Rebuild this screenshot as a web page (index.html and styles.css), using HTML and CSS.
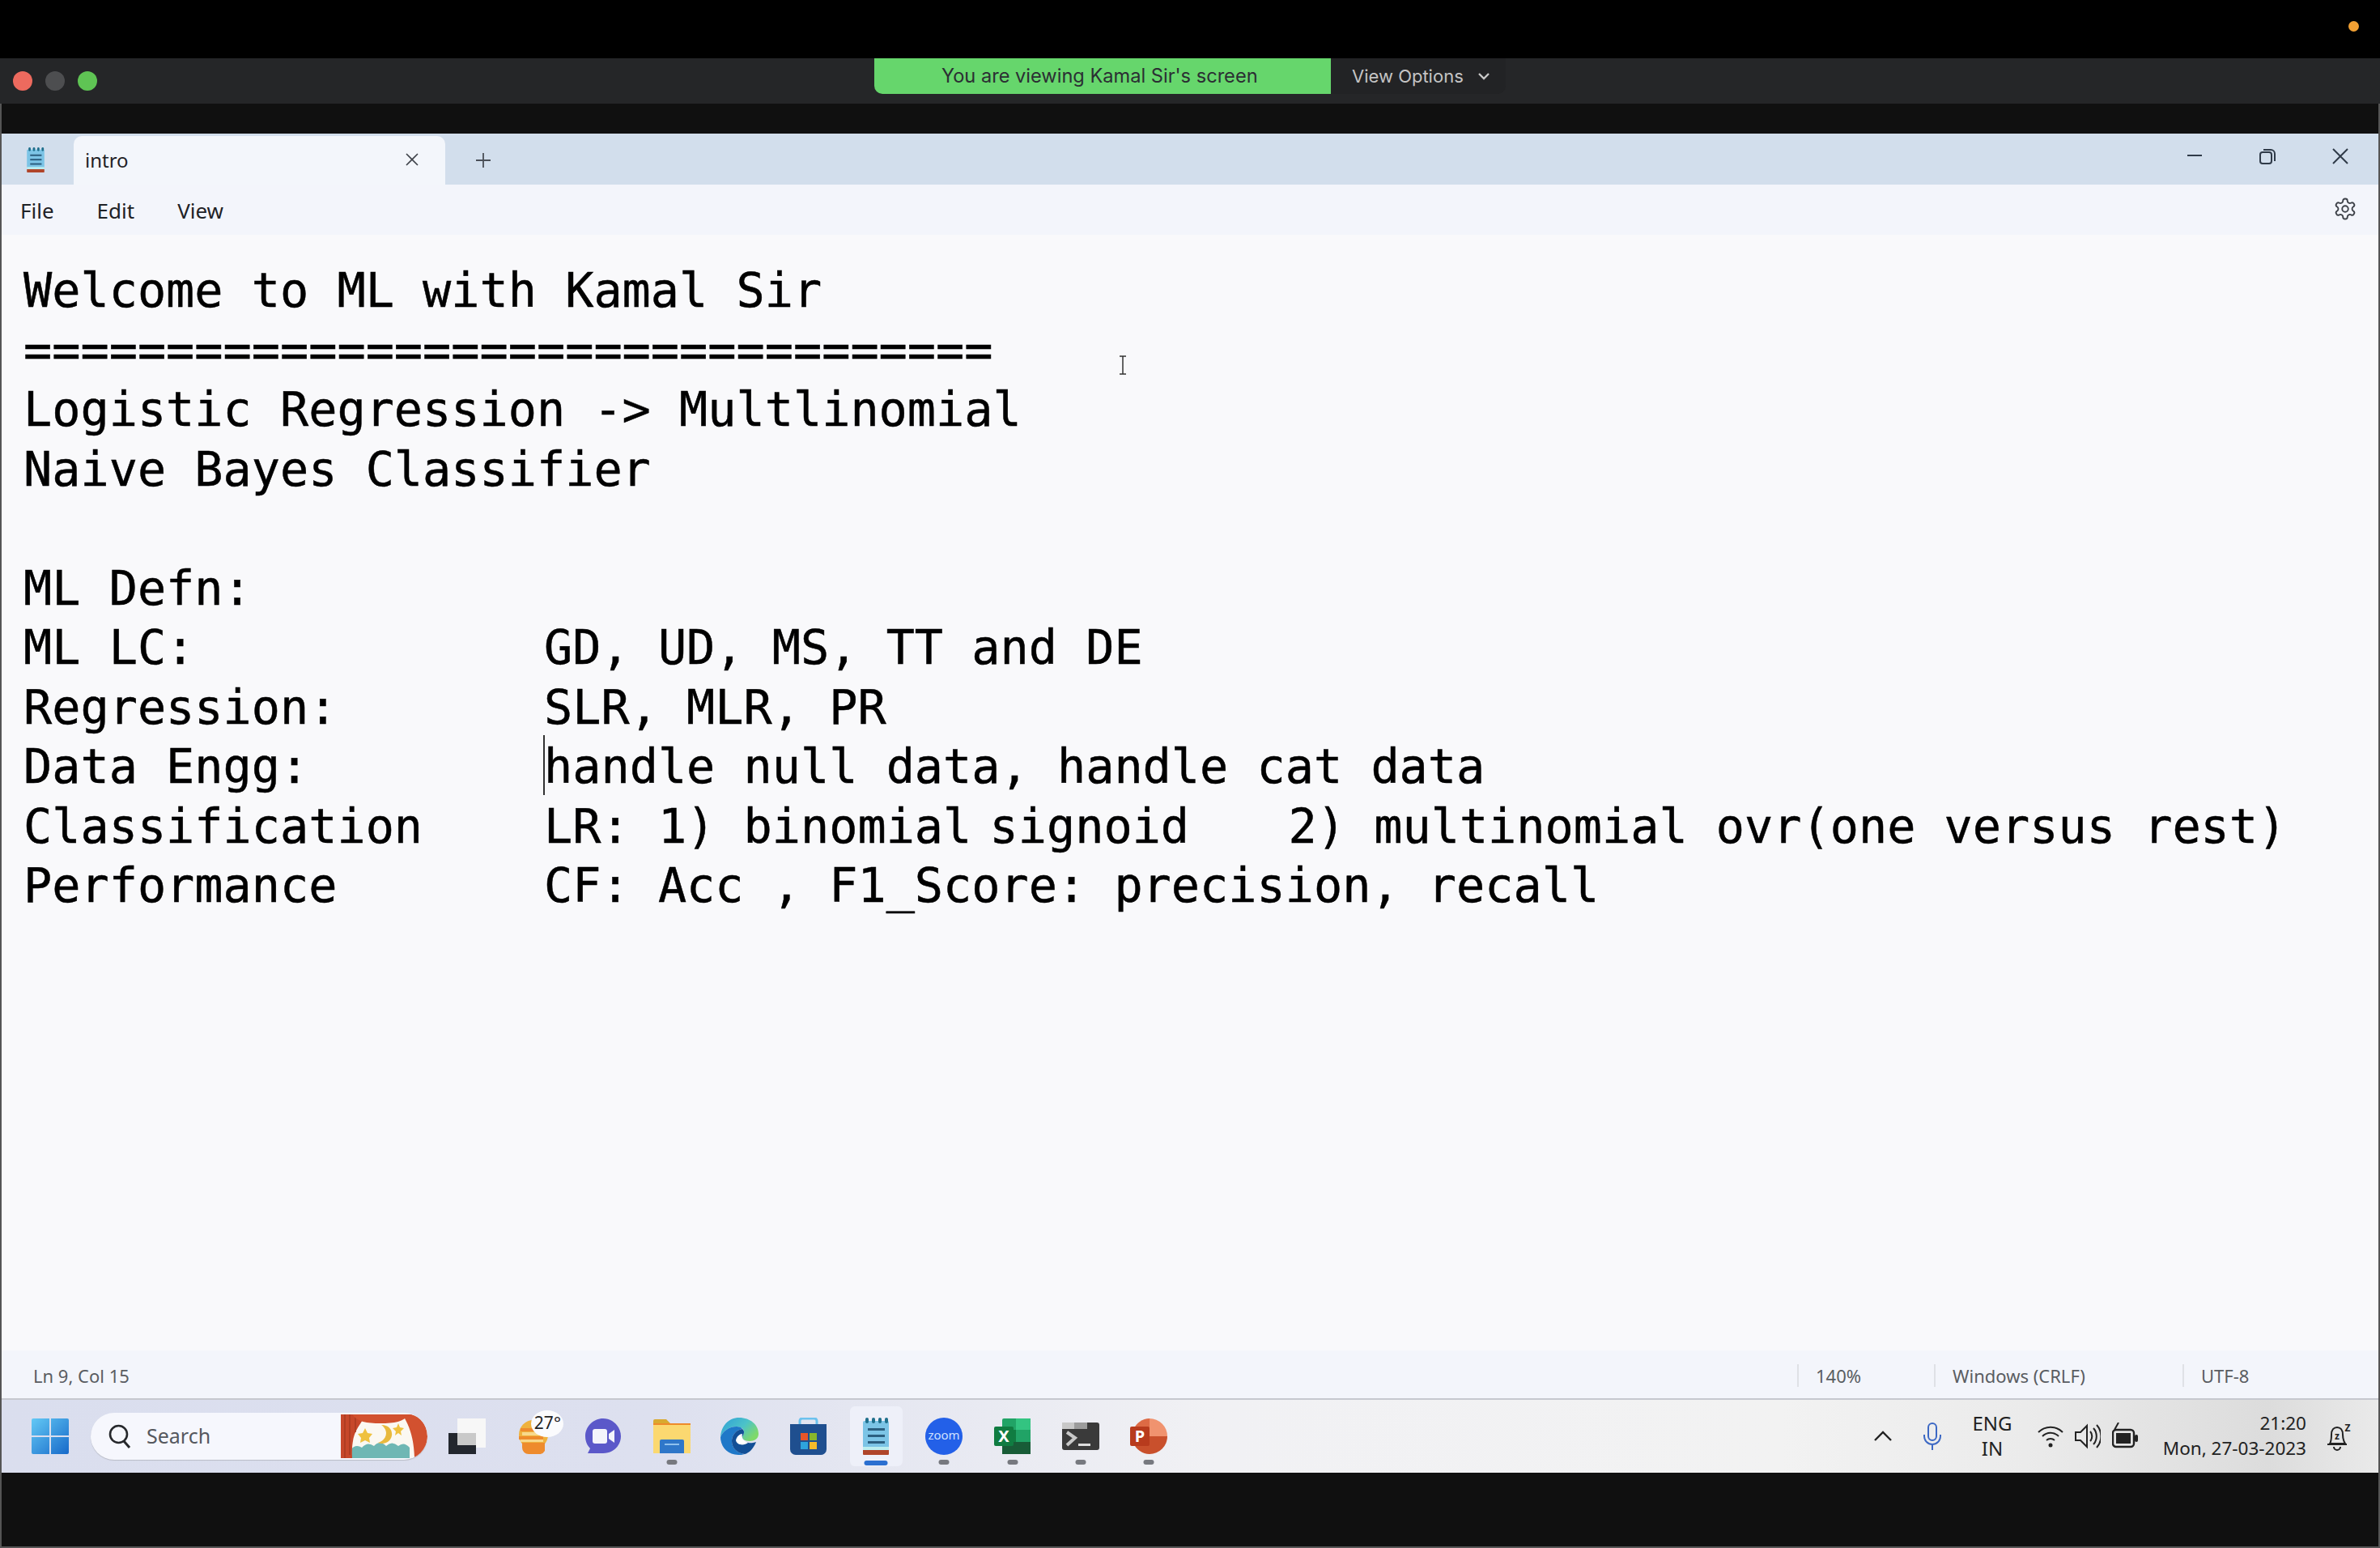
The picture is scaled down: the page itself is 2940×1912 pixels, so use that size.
FILE: index.html
```html
<!DOCTYPE html>
<html>
<head>
  <title>intro - Notepad</title>
  <link rel="stylesheet" href="styles.css">
</head>
<body>

<svg class="defs" width="0" height="0">
  <symbol id="notepad" viewBox="0 0 34 46">
    <rect x="1" y="4" width="32" height="36" rx="2" fill="#7cc4e6"/>
    <path d="M1 36h32v4H1z" fill="#bdeef0"/>
    <path d="M1 40h32v5a1 1 0 0 1-1 1H2a1 1 0 0 1-1-1z" fill="#b0452a"/>
    <g fill="#1f6f8c">
      <rect x="4" y="0" width="4" height="7" rx="2"/>
      <rect x="12" y="0" width="4" height="7" rx="2"/>
      <rect x="20" y="0" width="4" height="7" rx="2"/>
      <rect x="28" y="0" width="4" height="7" rx="2"/>
    </g>
    <g fill="#2c5f80">
      <rect x="7" y="13" width="21" height="3"/>
      <rect x="7" y="21" width="21" height="3"/>
      <rect x="7" y="29" width="21" height="3"/>
    </g>
  </symbol>
</svg>

<div class="top-bar"><span class="rec-dot"></span></div>

<div class="zoom-bar">
  <div class="lights">
    <span class="light red"></span>
    <span class="light grey"></span>
    <span class="light green"></span>
  </div>
  <div class="share-banner">
    <div class="share-msg">You are viewing Kamal Sir's screen</div>
    <div class="share-opts">
      <span>View Options</span>
      <svg width="16" height="10" viewBox="0 0 16 10"><path d="M2 2l6 6 6-6" fill="none" stroke="#c8c8c8" stroke-width="2.4"/></svg>
    </div>
  </div>
</div>

<div class="stage">
  <div class="window">

    <div class="title-bar">
      <svg class="app-icon" width="24" height="31"><use href="#notepad"/></svg>
      <div class="tab">
        <span class="tab-name">intro</span>
        <svg width="18" height="18" viewBox="0 0 18 18"><path d="M2 2l14 14M16 2L2 16" stroke="#3d4148" stroke-width="1.6" fill="none"/></svg>
      </div>
      <svg class="new-tab" width="20" height="20" viewBox="0 0 20 20"><path d="M10 1v18M1 10h18" stroke="#4a4f57" stroke-width="1.8" fill="none"/></svg>
      <div class="win-btns">
        <svg width="20" height="20" viewBox="0 0 20 20"><path d="M1 9h18" stroke="#2f3a48" stroke-width="2" fill="none"/></svg>
        <svg width="20" height="20" viewBox="0 0 20 20"><rect x="1" y="5" width="14" height="14" rx="3" fill="none" stroke="#2f3a48" stroke-width="2"/><path d="M5 2h9a5 5 0 0 1 5 5v9" fill="none" stroke="#2f3a48" stroke-width="2"/></svg>
        <svg width="20" height="20" viewBox="0 0 20 20"><path d="M1 1l18 18M19 1L1 19" stroke="#2f3a48" stroke-width="2" fill="none"/></svg>
      </div>
    </div>

    <div class="menu-bar">
      <span class="menu-item">File</span>
      <span class="menu-item">Edit</span>
      <span class="menu-item">View</span>
      <svg class="gear" width="30" height="30" viewBox="0 0 24 24" fill="none" stroke="#3d4148" stroke-width="1.5"><path d="M12.22 2h-.44a2 2 0 0 0-2 2v.18a2 2 0 0 1-1 1.73l-.43.25a2 2 0 0 1-2 0l-.15-.08a2 2 0 0 0-2.73.73l-.22.38a2 2 0 0 0 .73 2.73l.15.1a2 2 0 0 1 1 1.72v.51a2 2 0 0 1-1 1.74l-.15.09a2 2 0 0 0-.73 2.73l.22.38a2 2 0 0 0 2.73.73l.15-.08a2 2 0 0 1 2 0l.43.25a2 2 0 0 1 1 1.73V20a2 2 0 0 0 2 2h.44a2 2 0 0 0 2-2v-.18a2 2 0 0 1 1-1.73l.43-.25a2 2 0 0 1 2 0l.15.08a2 2 0 0 0 2.73-.73l.22-.39a2 2 0 0 0-.73-2.73l-.15-.08a2 2 0 0 1-1-1.74v-.5a2 2 0 0 1 1-1.74l.15-.09a2 2 0 0 0 .73-2.73l-.22-.38a2 2 0 0 0-2.73-.73l-.15.08a2 2 0 0 1-2 0l-.43-.25a2 2 0 0 1-1-1.73V4a2 2 0 0 0-2-2z"/><circle cx="12" cy="12" r="3"/></svg>
    </div>

    <div class="editor">
      <div class="line">Welcome to ML with Kamal Sir</div>
      <div class="line">==================================</div>
      <div class="line">Logistic Regression -&gt; Multlinomial</div>
      <div class="line">Naive Bayes Classifier</div>
      <div class="line"> </div>
      <div class="line">ML Defn:</div>
      <div class="line"><span class="label">ML LC:</span><span>GD, UD, MS, TT and DE</span></div>
      <div class="line"><span class="label">Regression:</span><span>SLR, MLR, PR</span></div>
      <div class="line"><span class="label">Data Engg:</span><span class="caret-cell">handle null data, handle cat data</span></div>
      <div class="line"><span class="label">Classification</span><span>LR: 1) binomial<span class="thin-space"> </span>signoid<span class="tab-gap">   </span>2) multinomial ovr(one versus rest)</span></div>
      <div class="line"><span class="label">Performance</span><span>CF: Acc , F1_Score: precision, recall</span></div>
      <svg class="ibeam" width="10" height="24" viewBox="0 0 10 24"><path d="M1 1h8M5 1v22M1 23h8" stroke="#333" stroke-width="1.5" fill="none"/></svg>
    </div>

    <div class="status-bar">
      <span class="status-pos">Ln 9, Col 15</span>
      <span class="status-seg seg-zoom">140%</span>
      <span class="status-seg seg-eol">Windows (CRLF)</span>
      <span class="status-seg seg-enc">UTF-8</span>
    </div>

    <div class="taskbar">
      <svg class="win-logo" width="46" height="44" viewBox="0 0 46 44">
        <defs><linearGradient id="winGrad" x1="0" y1="0" x2="1" y2="1"><stop offset="0" stop-color="#63c9f5"/><stop offset="1" stop-color="#1769c9"/></linearGradient></defs>
        <path d="M2 0h20v21H0V2a2 2 0 0 1 2-2zM24 0h20a2 2 0 0 1 2 2v19H24zM0 23h22v21H2a2 2 0 0 1-2-2zM24 23h22v19a2 2 0 0 1-2 2H24z" fill="url(#winGrad)"/>
      </svg>

      <div class="search">
        <svg width="28" height="30" viewBox="0 0 28 30"><circle cx="12.500" cy="12.500" r="10.500" fill="none" stroke="#26282c" stroke-width="2.6"/><path d="M19 21l7 8" stroke="#26282c" stroke-width="3" fill="none"/></svg>
        <span class="search-label">Search</span>
        <svg class="search-art" width="107" height="54" viewBox="0 0 107 54">
          <path d="M0 0h82c14 0 25 12 25 27s-11 27-25 27H0z" fill="#fbf8f2"/>
          <path d="M12 44q6-8 14-3 7-8 15-2 7-8 15 0 7-7 15 0 7-6 14 2v13H12z" fill="#6fb7b4"/>
          <path d="M0 0h30c-4 14-18 18-16 54H0z" fill="#c7472a"/>
          <path d="M5 0v54M11 0v50M18 0v22" stroke="#a83a20" stroke-width="1.500" fill="none"/>
          <path d="M76 0h10c12 2 21 13 21 27 0 13-7 23-16 26-1-20-4-36-15-53z" fill="#d2512f"/>
          <path d="M14 0h70c-6 9-18 11-35 11S20 9 14 0z" fill="#d2512f"/>
          <path d="M50 13c10 0 14 7 13 13-1 7-8 12-17 9 6-2 10-6 10-12 0-4-3-8-6-10z" fill="#e8b93d"/>
          <path d="M30 17l3 6 6 1-4 5 1 6-6-3-6 3 1-6-4-5 6-1z" fill="#efc13f"/>
          <path d="M71 11l2 5 5 1-4 4 1 5-4-3-4 3 1-5-4-4 5-1z" fill="#efc13f"/>
        </svg>
      </div>

      <div class="app-slot">
        <svg width="46" height="44" viewBox="0 0 46 44"><rect x="11" y="0" width="35" height="36" fill="#f7f7f7"/><rect x="0" y="18" width="34" height="26" fill="#23272e"/><rect x="11" y="18" width="23" height="15" fill="#c9c9c9"/></svg>
      </div>

      <div class="app-slot weather">
        <svg width="44" height="44" viewBox="0 0 44 44"><circle cx="20" cy="20" r="18" fill="#efb23e"/><path d="M4 12h22v4H4zM2 22h30v4H2zM6 30h28v10a8 8 0 0 1-8 4H14a8 8 0 0 1-8-8z" fill="#ee8b2d"/><path d="M6 17h24v4H6zM4 26h28v3H4z" fill="#f8d98c"/></svg>
        <span class="temp">27°</span>
      </div>

      <div class="app-slot">
        <svg width="44" height="44" viewBox="0 0 44 44"><path d="M22 0c12 0 22 10 22 22s-10 21-22 21H3l3-6C2 33 0 28 0 22 0 10 10 0 22 0z" fill="#5b58c9"/><rect x="9" y="13" width="18" height="18" rx="3" fill="#f4f4fb"/><path d="M29 19l7-5v16l-7-5z" fill="#f4f4fb"/></svg>
      </div>

      <div class="app-slot">
        <svg width="46" height="42" viewBox="0 0 46 42"><path d="M0 2a2 2 0 0 1 2-2h14l5 5h25v37H0z" fill="#d9a92f"/><rect x="0" y="6" width="46" height="36" fill="#fbd870"/><path d="M0 5h46v2H0z" fill="#ee8a2a"/><path d="M8 27a2 2 0 0 1 2-2h26a2 2 0 0 1 2 2v15H8z" fill="#2f77c9"/><rect x="14" y="30" width="18" height="2" fill="#8fc1ee"/></svg>
        <span class="pip"></span>
      </div>

      <div class="app-slot">
        <svg width="47" height="46" viewBox="0 0 47 46"><defs><linearGradient id="edgeGrad" x1="0" y1="0" x2="1" y2="0.600"><stop offset="0" stop-color="#2f9fd8"/><stop offset="0.600" stop-color="#4cc3c8"/><stop offset="1" stop-color="#7fd96a"/></linearGradient></defs><path d="M23 0c14 0 24 9 24 20 0 6-5 9-11 9-5 0-9-2-9-5 0-2 2-3 2-6 0-5-5-7-9-7C10 11 3 17 0 24 1 10 10 0 23 0z" fill="url(#edgeGrad)"/><path d="M0 24c3-7 10-13 20-13 3 0 6 1 7 3-8 1-13 8-13 15 0 7 5 15 16 16-3 1-5 1-8 1C9 46 0 36 0 24z" fill="#1f78c8"/><path d="M14 29c0-7 5-14 13-15 2 2 2 3 2 4 0 3-2 4-2 6 0 6 8 8 13 7 2 0 3-1 4-1-3 8-9 14-14 15-11-1-16-9-16-16z" fill="#124f96"/><path d="M19 28c1-5 5-8 8-8-1 4 0 8 7 11-5 4-14 3-15-3z" fill="#fff"/></svg>
      </div>

      <div class="app-slot">
        <svg width="45" height="46" viewBox="0 0 45 46"><path d="M12 10V4a3 3 0 0 1 3-3h15a3 3 0 0 1 3 3v6" fill="none" stroke="#6cc2ee" stroke-width="3"/><path d="M0 8h45v31a7 7 0 0 1-7 7H7a7 7 0 0 1-7-7z" fill="#1f4f8f"/><rect x="13" y="19" width="9" height="9" fill="#e8562a"/><rect x="24" y="19" width="9" height="9" fill="#88b62c"/><rect x="13" y="30" width="9" height="9" fill="#2ea3dc"/><rect x="24" y="30" width="9" height="9" fill="#f5bb2a"/></svg>
      </div>

      <div class="app-slot active">
        <svg width="34" height="46"><use href="#notepad"/></svg>
        <span class="pip-active"></span>
      </div>

      <div class="app-slot">
        <svg width="46" height="46" viewBox="0 0 46 46"><circle cx="23" cy="23" r="23" fill="#2360e8"/><text class="zoom-word" x="23" y="27">zoom</text></svg>
        <span class="pip"></span>
      </div>

      <div class="app-slot">
        <svg width="45" height="44" viewBox="0 0 45 44"><rect x="10" y="0" width="35" height="44" rx="2" fill="#21a366"/><rect x="27" y="0" width="18" height="14" fill="#33c481"/><rect x="27" y="14" width="18" height="15" fill="#21a366"/><rect x="10" y="14" width="17" height="15" fill="#107c41"/><rect x="10" y="29" width="35" height="15" fill="#185c37"/><rect x="0" y="10" width="24" height="24" rx="2" fill="#107c41"/><text class="excel-x" x="12" y="29">X</text></svg>
        <span class="pip"></span>
      </div>

      <div class="app-slot">
        <svg width="46" height="34" viewBox="0 0 46 34"><rect width="46" height="34" rx="3" fill="#3a3a3a"/><rect x="0" y="0" width="15" height="8" fill="#c8c8c8"/><rect x="15" y="0" width="16" height="8" fill="#9c9c9c"/><path d="M6 12l10 7-10 9" fill="none" stroke="#c8c8c8" stroke-width="4"/><rect x="20" y="26" width="15" height="3" fill="#ddd"/></svg>
        <span class="pip"></span>
      </div>

      <div class="app-slot">
        <svg width="46" height="44" viewBox="0 0 46 44"><path d="M24 0a22 22 0 0 1 22 22H24z" fill="#f0936f"/><path d="M46 22a22 22 0 0 1-22 22A22 22 0 0 1 4 30V22z" fill="#c9502c"/><path d="M24 0A22 22 0 0 0 4 14v8h20z" fill="#dd6a45"/><rect x="0" y="10" width="24" height="24" rx="2" fill="#b83b1d"/><text class="ppt-p" x="12" y="29">P</text></svg>
        <span class="pip"></span>
      </div>

      <div class="tray">
        <svg class="tray-chevron" width="24" height="14" viewBox="0 0 24 14"><path d="M2 12L12 2l10 10" fill="none" stroke="#222" stroke-width="2.4"/></svg>
        <svg class="tray-mic" width="24" height="34" viewBox="0 0 24 34" fill="none" stroke="#3c68c4" stroke-width="2"><rect x="7" y="1" width="10" height="21" rx="5"/><path d="M2 15v2a10 10 0 0 0 20 0v-2M12 27v7"/></svg>
        <div class="tray-lang"><span>ENG</span><span>IN</span></div>
        <svg class="tray-wifi" width="32" height="30" viewBox="0 0 32 30" fill="none" stroke="#222" stroke-width="2"><path d="M1 10a21 21 0 0 1 30 0M6 15a14 14 0 0 1 20 0M11 20a7 7 0 0 1 10 0"/><circle cx="16" cy="26" r="2.500" fill="#222" stroke="none"/></svg>
        <svg class="tray-vol" width="32" height="34" viewBox="0 0 32 34" fill="none" stroke="#222" stroke-width="2"><path d="M1 12h6l8-8v26l-8-8H1z"/><path d="M19 11a9 9 0 0 1 0 12M23 7a15 15 0 0 1 0 20M27 3a21 21 0 0 1 0 28"/></svg>
        <svg class="tray-batt" width="32" height="34" viewBox="0 0 32 34"><path d="M8 0L3 9" fill="none" stroke="#222" stroke-width="2"/><rect x="1" y="9" width="26" height="21" rx="4" fill="none" stroke="#222" stroke-width="2.4"/><rect x="5" y="13" width="18" height="13" fill="#222"/><rect x="28" y="15" width="4" height="9" rx="2" fill="#222"/></svg>
        <div class="tray-clock"><span>21:20</span><span>Mon, 27-03-2023</span></div>
        <svg class="tray-bell" width="32" height="38" viewBox="0 0 32 38"><path d="M3 28c2-3 2-7 2-11 0-6 3-9 7-9s7 3 7 9c0 4 1 8 3 11z" fill="none" stroke="#222" stroke-width="2"/><path d="M0 29h24M8 32a4 4 0 0 0 8 0" fill="none" stroke="#222" stroke-width="2"/><text class="bell-z" x="12" y="23">z</text><text class="bell-z" x="25" y="13">Z</text></svg>
      </div>
    </div>

  </div>
</div>

</body>
</html>
```

FILE: styles.css
```css
html, body {
  margin: 0;
  padding: 0;
}

body {
  width: 2940px;
  height: 1912px;
  display: flex;
  flex-direction: column;
  background: #000;
  overflow: hidden;
  font-family: 'Noto Sans', sans-serif;
}

.defs {
  position: absolute;
}

/* top of the zoom client */
.top-bar {
  height: 72px;
  flex: none;
  display: flex;
  align-items: center;
  justify-content: flex-end;
  padding-right: 26px;
  box-sizing: border-box;
}

.rec-dot {
  width: 13px;
  height: 13px;
  border-radius: 50%;
  background: #f2a033;
  margin-top: -7px;
}

.zoom-bar {
  height: 56px;
  flex: none;
  display: flex;
  background: #252628;
}

.lights {
  display: flex;
  align-items: center;
  gap: 16px;
  padding-left: 16px;
  width: 1080px;
  box-sizing: border-box;
}

.light {
  width: 24px;
  height: 24px;
  border-radius: 50%;
}

.light.red { background: #ed6a5e; }
.light.grey { background: #4d4e50; }
.light.green { background: #5fc454; }

.share-banner {
  display: flex;
  height: 44px;
  font-family: 'Inter', sans-serif;
  font-size: 23.6px;
  border-radius: 0 0 10px 10px;
  overflow: hidden;
}

.share-msg {
  width: 564px;
  box-sizing: border-box;
  padding-left: 83px;
  line-height: 44px;
  background: #66d66c;
  color: #2b2e33;
  white-space: nowrap;
}

.share-opts {
  width: 216px;
  box-sizing: border-box;
  padding-left: 26px;
  display: flex;
  align-items: center;
  gap: 17px;
  background: #222325;
  color: #c4c4c4;
  font-size: 22px;
}

/* everything under the zoom bar is the shared screen */
.stage {
  flex: 1;
  padding-top: 37px;
  background: #101010;
  border-left: 2px solid #555;
  border-right: 2px solid #555;
  border-bottom: 2px solid #555;
}

.window {
  height: 1654px;
  display: flex;
  flex-direction: column;
  color: #1f2226;
}

.title-bar {
  height: 63px;
  flex: none;
  display: flex;
  align-items: flex-end;
  background: #d2deec;
}

.app-icon {
  margin: 0 35px 15px 30px;
}

.tab {
  width: 459px;
  height: 60px;
  box-sizing: border-box;
  display: flex;
  align-items: center;
  justify-content: space-between;
  padding: 0 32px 2px 14px;
  background: #f3f6fb;
  border-radius: 10px 10px 0 0;
  font-size: 24px;
}

.new-tab {
  margin: 0 0 20px 37px;
}

.win-btns {
  margin-left: auto;
  align-self: flex-start;
  display: flex;
  gap: 70px;
  padding: 18px 37px 0 0;
}

.menu-bar {
  height: 62px;
  flex: none;
  box-sizing: border-box;
  padding: 2px 0 0 23px;
  display: flex;
  align-items: center;
  gap: 53px;
  background: #f3f5fb;
  font-size: 26px;
}

.gear {
  margin-left: auto;
  margin-right: 26px;
  margin-top: -4px;
}

.editor {
  flex: 1;
  position: relative;
  padding: 33px 0 0 27px;
  background: #f9f9fb;
  font-family: 'DejaVu Sans Mono', monospace;
  font-size: 58.5px;
  line-height: 73.5px;
  color: #000;
  -webkit-text-stroke: 0.5px #000;
}

.line {
  height: 73.5px;
  display: flex;
  white-space: pre;
}

.label {
  width: 643px;
  flex: none;
}

.caret-cell {
  position: relative;
}

.caret-cell::before {
  content: "";
  position: absolute;
  left: -1px;
  top: -3px;
  width: 2px;
  height: 74px;
  background: #333;
}

.thin-space {
  letter-spacing: -13px;
}

.tab-gap {
  letter-spacing: 5.6px;
}

.ibeam {
  position: absolute;
  left: 1380px;
  top: 149px;
}

.status-bar {
  height: 59px;
  flex: none;
  box-sizing: border-box;
  padding-top: 2px;
  display: flex;
  align-items: center;
  background: #f3f5fb;
  font-size: 22px;
  color: #5a5d62;
}

.status-pos {
  margin-left: 39px;
  margin-right: auto;
}

.status-seg {
  height: 28px;
  line-height: 28px;
  box-sizing: border-box;
  padding-left: 21px;
  border-left: 2px solid #dfe1e6;
}

.seg-zoom { width: 169px; }
.seg-eol { width: 307px; }
.seg-enc { width: 242px; }

.taskbar {
  height: 92px;
  flex: none;
  box-sizing: border-box;
  display: flex;
  align-items: center;
  border-top: 2px solid #c6c8cf;
  background: linear-gradient(90deg, #dadeee 0, #dde0ef 800px, #f1f1f4 1500px, #f2f2f2 2200px, #ebebeb 2500px, #dcdcdc 2800px, #eaeaea 2938px);
}

.win-logo {
  margin-left: 37px;
  flex: none;
}

.search {
  width: 416px;
  height: 58px;
  flex: none;
  margin-left: 27px;
  margin-right: 7px;
  box-sizing: border-box;
  display: flex;
  align-items: center;
  padding-left: 22px;
  background: #f6f7fd;
  border-radius: 29px;
  box-shadow: 0 1px 1px #b9bcc6;
  font-size: 25px;
  color: #55585e;
  overflow: hidden;
}

.search-label {
  margin-left: 19px;
  padding-bottom: 2px;
}

.search-art {
  margin-left: auto;
}

.app-slot {
  width: 84.2px;
  height: 74px;
  flex: none;
  box-sizing: border-box;
  position: relative;
  display: flex;
  align-items: center;
  justify-content: center;
  border-radius: 6px;
}

.app-slot.active {
  background: #eef0f9;
  width: 65px;
  margin: 0 9.6px;
}

.pip, .pip-active {
  position: absolute;
  left: 50%;
  transform: translateX(-50%);
  border-radius: 3px;
}

.pip {
  bottom: 2px;
  width: 13px;
  height: 6px;
  background: #77797f;
}

.pip-active {
  bottom: 1px;
  width: 29px;
  height: 6px;
  background: #2b6fd0;
}

.temp {
  position: absolute;
  right: 7px;
  top: 5px;
  width: 40px;
  height: 33px;
  line-height: 30px;
  text-align: center;
  border-radius: 50%;
  background: #fbfbfd;
  font-size: 21px;
  color: #222;
}

.zoom-word {
  font-size: 15px;
  fill: #cfe0ff;
  text-anchor: middle;
}

.excel-x, .ppt-p {
  font-size: 20px;
  font-weight: 700;
  fill: #fff;
  text-anchor: middle;
}

.tray {
  margin-left: auto;
  padding-right: 31px;
  display: flex;
  align-items: center;
  color: #222;
  font-size: 24px;
}

.tray-mic { margin-left: 37px; }
.tray-wifi { margin-left: 26px; }
.tray-vol, .tray-batt { margin-left: 14px; }
.tray-bell { margin-left: 26px; }

.tray-lang {
  width: 60px;
  margin-left: 32px;
  display: flex;
  flex-direction: column;
  align-items: center;
  line-height: 31px;
  margin-top: -2px;
}

.tray-clock {
  width: 178px;
  margin-left: 30px;
  margin-top: -2px;
  display: flex;
  flex-direction: column;
  align-items: flex-end;
  font-size: 22.5px;
  line-height: 31px;
  white-space: nowrap;
}

.bell-z {
  font-size: 12px;
  font-weight: 700;
  fill: #222;
  text-anchor: middle;
}
```
